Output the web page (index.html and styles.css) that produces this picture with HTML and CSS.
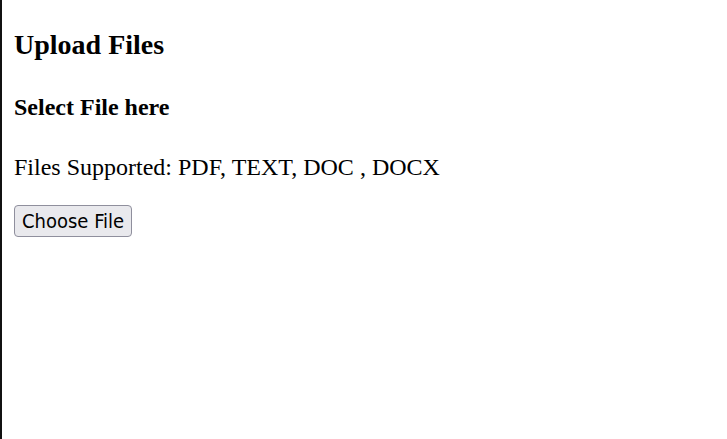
FILE: index.html
```html
<!DOCTYPE html>
<html>
<head>
<meta charset="utf-8">
<link rel="stylesheet" href="styles.css">
</head>
<body>
<div class="page">
  <h2 class="title">Upload Files</h2>
  <h4 class="subtitle">Select File here</h4>
  <p class="note">Files Supported: PDF, TEXT, DOC , DOCX</p>
  <button class="file-btn" type="button">Choose File</button>
</div>
</body>
</html>
```
FILE: styles.css
```css
html, body {
  margin: 0;
  padding: 0;
  height: 100%;
}
body {
  font-family: "Liberation Serif", "Times New Roman", serif;
  color: #000;
  background: #fff;
}
.page {
  box-sizing: border-box;
  height: 100%;
  border-left: 2px solid #111;
  padding: 2px 12px 12px 12px;
}
.title {
  font-size: 28px;
  font-weight: bold;
  margin: 27px 0 28px 0;
  line-height: 32px;
}
.subtitle {
  font-size: 24px;
  font-weight: bold;
  margin: 32px 0 32px 0;
  line-height: 28px;
}
.note {
  font-size: 24px;
  margin: 24px 0 24px 0;
  line-height: 28px;
}
.file-btn {
  font-family: "DejaVu Sans Condensed", "DejaVu Sans", Verdana, sans-serif;
  font-stretch: condensed;
  font-size: 20px;
  height: 32px;
  padding: 0 7px;
  background: #e9e9ed;
  border: 1px solid #8f8f9d;
  border-radius: 4px;
  color: #000;
}
```
